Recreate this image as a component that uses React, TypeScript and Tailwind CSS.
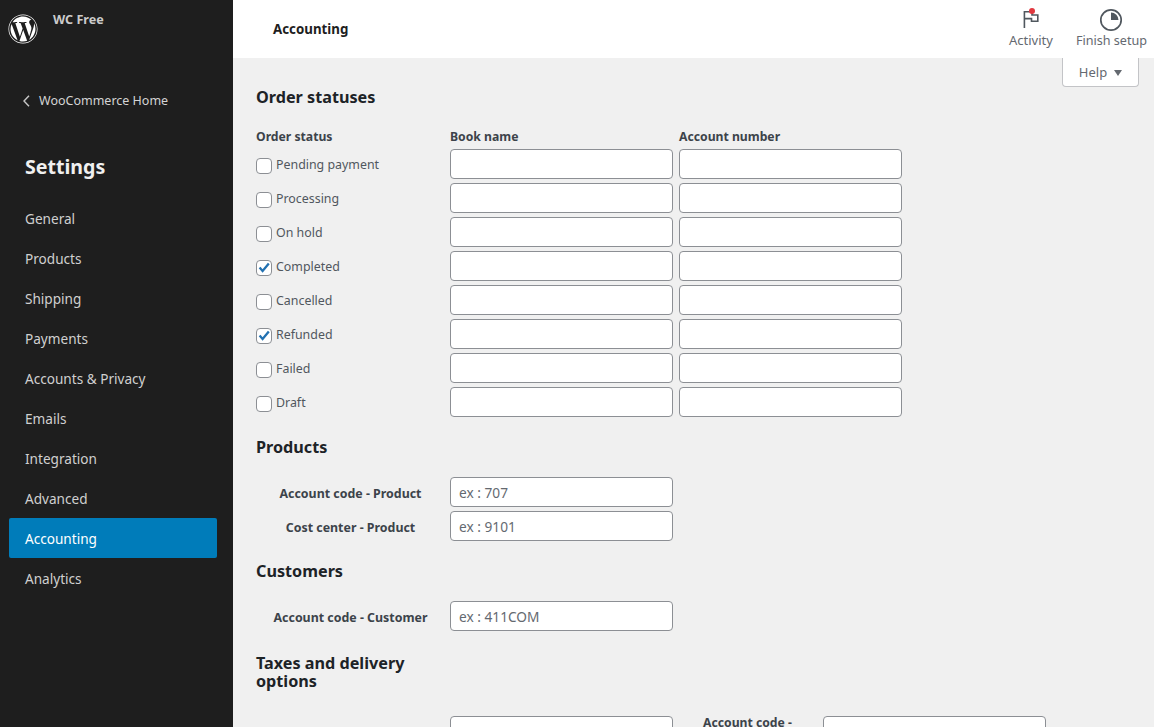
import { FaWordpress } from 'react-icons/fa';

const menuItems = ['General', 'Products', 'Shipping', 'Payments', 'Accounts & Privacy', 'Emails', 'Integration', 'Advanced', 'Accounting', 'Analytics'];

const statuses = [
  { label: 'Pending payment', checked: false },
  { label: 'Processing', checked: false },
  { label: 'On hold', checked: false },
  { label: 'Completed', checked: true },
  { label: 'Cancelled', checked: false },
  { label: 'Refunded', checked: true },
  { label: 'Failed', checked: false },
  { label: 'Draft', checked: false },
];

function TextBox({ placeholder }: { placeholder?: string }) {
  return (
    <div className="w-[223px] h-[30px] shrink-0 bg-white border border-[#8c8f94] rounded-[4px] pl-[8px] pt-[2px] flex items-center text-[13.7px] text-[#646970]">
      {placeholder}
    </div>
  );
}

function CheckBox({ checked }: { checked: boolean }) {
  return (
    <div className="w-[16px] h-[16px] mt-[9px] shrink-0 bg-white border border-[#8c8f94] rounded-[4px] relative">
      {checked && (
        <svg viewBox="0 0 14 14" className="absolute left-0 top-0 w-[14px] h-[14px]">
          <path d="M2.6 6.6 L5.6 10 L11.8 2.6" fill="none" stroke="#2271b1" strokeWidth="2.3" />
        </svg>
      )}
    </div>
  );
}

function Sidebar() {
  return (
    <aside className="w-[233px] shrink-0 bg-[#1e1e1e] text-[#f0f0f0]">
      <div className="flex h-[58px] pl-[8px]">
        <FaWordpress className="w-[30px] h-[30px] mt-[14px] text-white" />
        <div className="ml-[15px] mt-[12px] text-[12.6px] leading-[16px] font-bold text-[#cbcbcb]">WC Free</div>
      </div>
      <div className="flex items-center h-[20px] mt-[33px] pl-[23px] text-[12.5px] text-[#d4d4d4]">
        <svg viewBox="0 0 7 12" className="w-[7px] h-[12px]">
          <path d="M6 0.7 L1 6 L6 11.3" fill="none" stroke="#c8c8c8" strokeWidth="1.4" />
        </svg>
        <span className="ml-[9px]">WooCommerce Home</span>
      </div>
      <div className="pl-[25px] mt-[42px] text-[19.6px] leading-[28px] font-bold text-[#f0f0f0]">Settings</div>
      <nav className="mt-[17px] px-[9px]">
        {menuItems.map((item) => (
          <div
            key={item}
            className={`h-[40px] w-[208px] flex items-center pl-[16px] pt-[2px] text-[13.6px] rounded-[2px] ${
              item === 'Accounting' ? 'bg-[#007cba] text-white' : 'text-[#d0d0d0]'
            }`}
          >
            {item}
          </div>
        ))}
      </nav>
    </aside>
  );
}

function Header() {
  return (
    <header className="h-[58px] shrink-0 bg-white flex justify-between">
      <div className="pl-[40px] pt-[20px] leading-[18px] text-[13.3px] font-bold text-[#1e1e1e]">Accounting</div>
      <div className="flex items-start pr-[7px] gap-[23px] text-[#646970]">
        <div className="flex flex-col items-center text-[13px]">
          <div className="relative h-[24px] w-[24px] mt-[8px]">
            <svg viewBox="0 0 24 24" className="w-[24px] h-[24px]">
              <path d="M5.4 20 V3.8 H13 V7 H18.8 V13.2 H12.5 V10.6 H5.4" fill="none" stroke="#50575e" strokeWidth="1.6" />
            </svg>
            <div className="absolute top-0 left-[10px] w-[6px] h-[6px] rounded-full bg-[#e2383f]" />
          </div>
          <span className="-mt-[1px] leading-[18px]">Activity</span>
        </div>
        <div className="flex flex-col items-center text-[12.6px]">
          <svg viewBox="0 0 24 24" className="w-[24px] h-[24px] mt-[8px]">
            <circle cx="12" cy="12" r="10.2" fill="none" stroke="#50575e" strokeWidth="1.7" />
            <path d="M12 12 V4.5 A7.5 7.5 0 0 1 19.5 12 Z" fill="#50575e" />
          </svg>
          <span className="leading-[18px]">Finish setup</span>
        </div>
      </div>
    </header>
  );
}

function SectionTitle({ children }: { children: React.ReactNode }) {
  return <h2 className="w-[170px] text-[16.2px] leading-[18px] font-bold text-[#1d2327]">{children}</h2>;
}

function FieldRow({ label, placeholder }: { label: string; placeholder: string }) {
  return (
    <div className="flex items-center">
      <div className="w-[189px] mr-[5px] pt-[4px] text-center text-[12.4px] font-bold text-[#3c434a]">{label}</div>
      <TextBox placeholder={placeholder} />
    </div>
  );
}

export default function App() {
  return (
    <div className="flex h-[727px] w-[1154px] overflow-hidden bg-[#f0f0f0] font-['Noto_Sans','Open_Sans',sans-serif]">
      <Sidebar />
      <div className="flex-1 flex flex-col min-w-0 relative">
        <Header />
        <div className="absolute right-[15px] top-[58px] w-[77px] h-[29px] pt-[1px] bg-white border border-t-0 border-[#c3c4c7] rounded-b-[4px] flex items-center justify-center gap-[7px] text-[13px] text-[#646970]">
          Help
          <span className="w-0 h-0 border-x-[4.5px] border-x-transparent border-t-[6px] border-t-[#646970]" />
        </div>
        <main className="pl-[23px] pt-[30px]">
          <SectionTitle>Order statuses</SectionTitle>
          <div className="flex mt-[22px] h-[18px] items-center text-[12.2px] font-bold text-[#3c434a]">
            <div className="w-[194px]">Order status</div>
            <div className="w-[229px]">Book name</div>
            <div>Account number</div>
          </div>
          <div className="mt-[3px] flex flex-col gap-[4px]">
            {statuses.map((status) => (
              <div key={status.label} className="flex">
                <div className="w-[194px] flex items-start gap-[4px] text-[12.4px] leading-[18px] text-[#50575e]">
                  <CheckBox checked={status.checked} />
                  <span className="mt-[7px]">{status.label}</span>
                </div>
                <TextBox />
                <div className="w-[6px]" />
                <TextBox />
              </div>
            ))}
          </div>
          <div className="mt-[21px]">
            <SectionTitle>Products</SectionTitle>
          </div>
          <div className="mt-[21px] flex flex-col gap-[4px]">
            <FieldRow label="Account code - Product" placeholder="ex : 707" />
            <FieldRow label="Cost center - Product" placeholder="ex : 9101" />
          </div>
          <div className="mt-[21px]">
            <SectionTitle>Customers</SectionTitle>
          </div>
          <div className="mt-[21px]">
            <FieldRow label="Account code - Customer" placeholder="ex : 411COM" />
          </div>
          <div className="mt-[23px]">
            <SectionTitle>Taxes and delivery options</SectionTitle>
          </div>
          <div className="mt-[26px] flex items-start">
            <div className="w-[194px]" />
            <TextBox />
            <div className="w-[150px] pl-[30px] -mt-[2px] text-[12.2px] font-bold text-[#3c434a]">Account code -</div>
            <TextBox />
          </div>
        </main>
      </div>
    </div>
  );
}
